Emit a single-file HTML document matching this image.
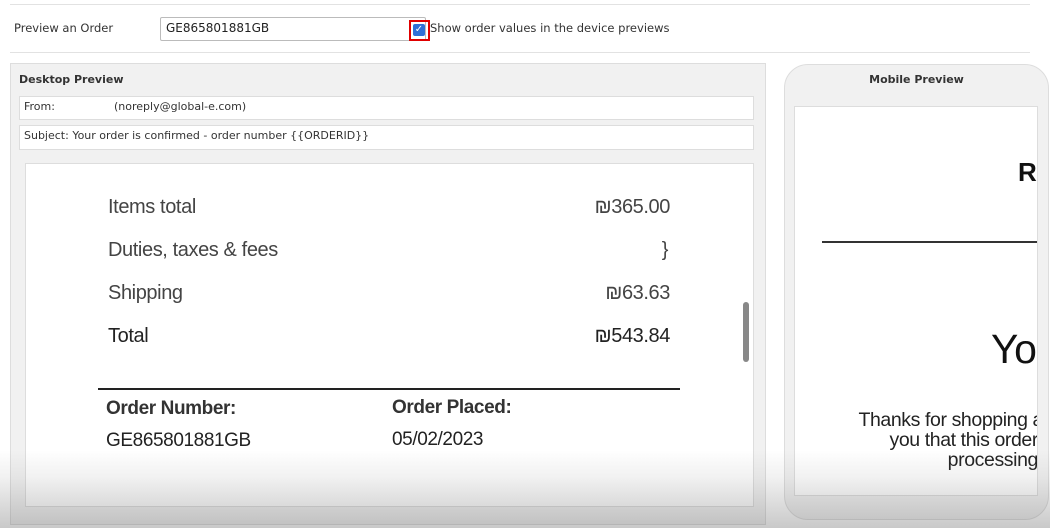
<!DOCTYPE html>
<html><head><style>
body{margin:0;width:1050px;height:528px;background:#fff;position:relative;overflow:hidden;font-family:"DejaVu Sans","Liberation Sans",sans-serif;}
.a{position:absolute;}
.ui{font-size:11.5px;color:#333;}
.hv{font-family:"Liberation Sans",Arial,sans-serif;color:#333;letter-spacing:-0.4px;}
</style></head><body>
<div class="a" style="left:10px;top:4px;width:1020px;height:1px;background:#e2e2e2"></div>
<div class="a ui" style="left:14px;top:21px;">Preview an Order</div>
<div class="a" style="left:160px;top:17px;width:264px;height:22px;border:1px solid #bbb;border-radius:2px;"></div>
<div class="a ui" style="left:166px;top:21px;color:#222;font-size:12px">GE865801881GB</div>
<div class="a" style="left:409px;top:20px;width:17px;height:17px;border:2px solid #e00000;"></div>
<div class="a" style="left:413px;top:24px;width:12px;height:12px;background:#2f6fd6;border-radius:2px;color:#fff;font-size:10px;line-height:12px;text-align:center">✓</div>
<div class="a ui" style="left:430px;top:21px;">Show order values in the device previews</div>
<div class="a" style="left:10px;top:52px;width:1020px;height:1px;background:#e2e2e2"></div>

<div class="a" style="left:10px;top:63px;width:754px;height:460px;background:#f1f1f1;border:1px solid #ddd;"></div>
<div class="a ui" style="left:19px;top:73px;font-weight:bold;font-size:11px">Desktop Preview</div>
<div class="a" style="left:19px;top:96px;width:733px;height:22px;background:#fff;border:1px solid #ddd"></div>
<div class="a ui" style="left:24px;top:100px;font-size:11px">From:</div>
<div class="a ui" style="left:114px;top:100px;font-size:11px">(noreply@global-e.com)</div>
<div class="a" style="left:19px;top:125px;width:733px;height:23px;background:#fff;border:1px solid #ddd"></div>
<div class="a ui" style="left:24px;top:129px;font-size:11px">Subject: Your order is confirmed - order number {{ORDERID}}</div>
<div class="a" style="left:25px;top:163px;width:727px;height:342px;background:#fff;border:1px solid #ddd"></div>
<div class="a" style="left:743px;top:302px;width:6px;height:60px;background:#888;border-radius:3px"></div>

<div class="a hv" style="left:108px;top:196px;font-size:20px;color:#444">Items total</div>
<div class="a hv" style="right:380px;top:196px;font-size:20px;color:#444">₪365.00</div>
<div class="a hv" style="left:108px;top:239px;font-size:20px;color:#444">Duties, taxes &amp; fees</div>
<div class="a hv" style="right:382px;top:239px;font-size:20px;color:#444">}</div>
<div class="a hv" style="left:108px;top:282px;font-size:20px;color:#444">Shipping</div>
<div class="a hv" style="right:380px;top:282px;font-size:20px;color:#444">₪63.63</div>
<div class="a hv" style="left:108px;top:325px;font-size:20px;color:#222">Total</div>
<div class="a hv" style="right:380px;top:325px;font-size:20px;color:#222">₪543.84</div>
<div class="a" style="left:98px;top:388px;width:582px;height:2px;background:#222"></div>
<div class="a hv" style="left:106px;top:398px;font-size:19px;font-weight:bold">Order Number:</div>
<div class="a hv" style="left:392px;top:397px;font-size:19px;font-weight:bold">Order Placed:</div>
<div class="a hv" style="left:106px;top:430px;font-size:19px;color:#222">GE865801881GB</div>
<div class="a hv" style="left:392px;top:429px;font-size:19px;color:#222">05/02/2023</div>

<div class="a" style="left:784px;top:64px;width:263px;height:454px;background:#f1f1f1;border:1px solid #ddd;border-radius:24px"></div>
<div class="a ui" style="left:784px;width:265px;text-align:center;top:73px;font-weight:bold;font-size:11px">Mobile Preview</div>
<div class="a" style="left:794px;top:106px;width:242px;height:388px;background:#fff;border:1px solid #ddd;overflow:hidden">
  <div class="a hv" style="left:223px;top:50px;font-size:26px;font-weight:bold;color:#111">R</div>
  <div class="a" style="left:27px;top:134px;width:220px;height:2px;background:#333"></div>
  <div class="a hv" style="left:196px;top:219px;font-size:41px;color:#111">Yo</div>
  <div class="a hv" style="right:-6px;top:303px;font-size:19.5px;line-height:20px;text-align:right;color:#222;white-space:nowrap">Thanks for shopping a<br>you that this order&nbsp;<br>processing&nbsp;</div>
</div>
<div class="a" style="left:0;top:450px;width:1050px;height:78px;background:linear-gradient(to bottom,rgba(120,120,120,0),rgba(120,120,120,0.1) 35%,rgba(100,100,100,0.35))"></div>
</body></html>
